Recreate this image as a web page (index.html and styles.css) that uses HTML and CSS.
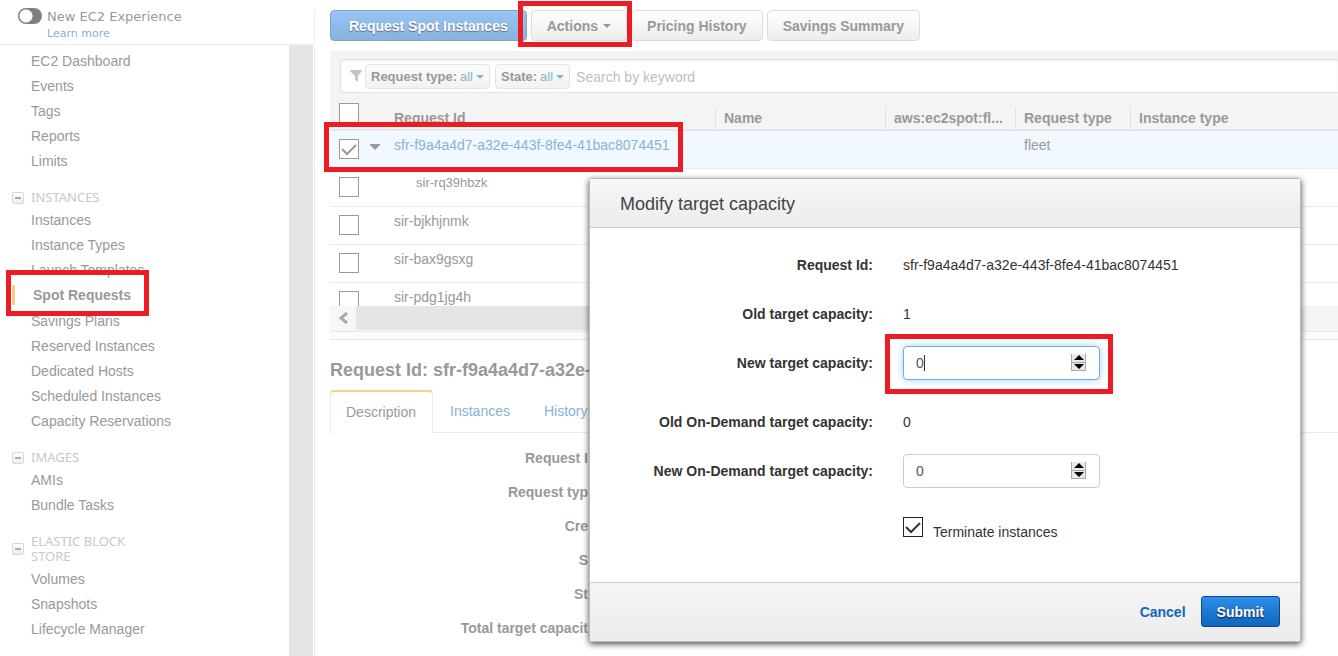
FILE: index.html
```html
<!DOCTYPE html>
<html lang="en">
<head>
<meta charset="utf-8">
<title>Spot Requests</title>
<link rel="stylesheet" href="styles.css">
</head>
<body>
<div class="app">
  <aside class="sidebar">
    <div class="experience">
      <input type="checkbox" class="switch" id="new-exp">
      <label for="new-exp">New EC2 Experience</label>
      <a href="#">Learn more</a>
    </div>
    <div class="nav-area">
      <nav class="nav">
        <ul>
          <li><a href="#">EC2 Dashboard</a></li>
          <li><a href="#">Events</a></li>
          <li><a href="#">Tags</a></li>
          <li><a href="#">Reports</a></li>
          <li><a href="#">Limits</a></li>
        </ul>
        <h2><button class="fold" aria-label="Collapse Instances"></button><span>INSTANCES</span></h2>
        <ul>
          <li><a href="#">Instances</a></li>
          <li><a href="#">Instance Types</a></li>
          <li><a href="#">Launch Templates</a></li>
          <li class="current"><a href="#">Spot Requests</a><span class="mark mark-nav"></span></li>
          <li><a href="#">Savings Plans</a></li>
          <li><a href="#">Reserved Instances</a></li>
          <li><a href="#">Dedicated Hosts</a></li>
          <li><a href="#">Scheduled Instances</a></li>
          <li><a href="#">Capacity Reservations</a></li>
        </ul>
        <h2><button class="fold" aria-label="Collapse Images"></button><span>IMAGES</span></h2>
        <ul>
          <li><a href="#">AMIs</a></li>
          <li><a href="#">Bundle Tasks</a></li>
        </ul>
        <h2><button class="fold" aria-label="Collapse Elastic Block Store"></button><span>ELASTIC BLOCK STORE</span></h2>
        <ul>
          <li><a href="#">Volumes</a></li>
          <li><a href="#">Snapshots</a></li>
          <li><a href="#">Lifecycle Manager</a></li>
        </ul>
      </nav>
      <div class="nav-scroll"></div>
    </div>
  </aside>

  <main class="main">
    <div class="toolbar">
      <button class="btn btn-primary">Request Spot Instances</button>
      <div class="marked">
        <button class="btn">Actions <svg width="8" height="4" viewBox="0 0 8 4"><path d="M0 0h8L4 4z" fill="#999"/></svg></button>
        <span class="mark mark-actions"></span>
      </div>
      <button class="btn">Pricing History</button>
      <button class="btn">Savings Summary</button>
    </div>

    <section class="panel">
      <div class="search">
        <svg class="funnel" width="12" height="12" viewBox="0 0 12 12"><path d="M0 0h12v1L8 6v6L5 10V6L0 1z" fill="#c4c4c4"/></svg>
        <div class="chip">
          <label for="f-type">Request type:</label>
          <select id="f-type"><option>all</option></select>
        </div>
        <div class="chip">
          <label for="f-state">State:</label>
          <select id="f-state"><option>all</option></select>
        </div>
        <input class="keyword" type="text" placeholder="Search by keyword" aria-label="Search by keyword">
      </div>
      <div class="grid">
        <table>
          <colgroup><col class="c-check"><col class="c-id"><col class="c-name"><col class="c-tag"><col class="c-type"><col></colgroup>
          <thead>
            <tr><th><input type="checkbox" class="tick" aria-label="Select all"></th><th>Request Id</th><th class="sep">Name</th><th class="sep">aws:ec2spot:fl...</th><th class="sep">Request type</th><th class="sep">Instance type</th></tr>
          </thead>
          <tbody>
            <tr class="selected"><td><input type="checkbox" class="tick" checked aria-label="Select fleet"><svg class="expand" width="10" height="6" viewBox="0 0 10 6"><path d="M0 0h10v1L5 6 0 1z" fill="#999"/></svg></td><td><a href="#">sfr-f9a4a4d7-a32e-443f-8fe4-41bac8074451</a></td><td></td><td></td><td>fleet</td><td></td></tr>
            <tr><td><input type="checkbox" class="tick" aria-label="Select sir-rq39hbzk"></td><td class="child">sir-rq39hbzk</td><td></td><td></td><td></td><td></td></tr>
            <tr><td><input type="checkbox" class="tick" aria-label="Select sir-bjkhjnmk"></td><td>sir-bjkhjnmk</td><td></td><td></td><td></td><td></td></tr>
            <tr><td><input type="checkbox" class="tick" aria-label="Select sir-bax9gsxg"></td><td>sir-bax9gsxg</td><td></td><td></td><td></td><td></td></tr>
            <tr><td><input type="checkbox" class="tick" aria-label="Select sir-pdg1jg4h"></td><td>sir-pdg1jg4h</td><td></td><td></td><td></td><td></td></tr>
          </tbody>
        </table>
      </div>
      <span class="mark mark-row"></span>
      <div class="hscroll">
        <button aria-label="Scroll left"><svg width="10" height="12" viewBox="0 0 10 12"><path d="M9 1L3 6l6 5" fill="none" stroke="#aaa" stroke-width="3"/></svg></button>
        <div class="thumb"></div>
      </div>
      <div class="splitter"></div>
    </section>

    <section class="details">
      <h1>Request Id: sfr-f9a4a4d7-a32e-</h1>
      <div class="tabs">
        <a class="tab active" href="#">Description</a>
        <a class="tab" href="#">Instances</a>
        <a class="tab" href="#">History</a>
      </div>
      <ul class="facts">
        <li>Request I</li>
        <li>Request typ</li>
        <li>Cre</li>
        <li>S</li>
        <li>St</li>
        <li>Total target capacit</li>
      </ul>
    </section>
  </main>
</div>

<form class="modal" role="dialog" aria-labelledby="modal-title">
  <header><h2 id="modal-title">Modify target capacity</h2></header>
  <div class="fields">
    <span class="name">Request Id:</span><span>sfr-f9a4a4d7-a32e-443f-8fe4-41bac8074451</span>
    <span class="name">Old target capacity:</span><span>1</span>
    <label class="name" for="cap">New target capacity:</label>
    <div class="number focused">
      <input type="number" id="cap" value="0">
      <span class="caret"></span>
      <svg class="spin" width="16" height="18" viewBox="0 0 16 18"><path d="M0 0h15v17H0z" fill="#e9e9e9"/><path d="M1 8.500h14M1 16.500h14M14.500 0v17M.5 0v17" stroke="#aaa"/><path d="M3 6l5-5 5 5zM3 10h10l-5 5z" fill="#000"/></svg>
      <span class="mark mark-input"></span>
    </div>
    <span class="name">Old On-Demand target capacity:</span><span>0</span>
    <label class="name" for="od">New On-Demand target capacity:</label>
    <div class="number">
      <input type="number" id="od" value="0">
      <svg class="spin" width="16" height="18" viewBox="0 0 16 18"><path d="M0 0h15v17H0z" fill="#e9e9e9"/><path d="M1 8.500h14M1 16.500h14M14.500 0v17M.5 0v17" stroke="#aaa"/><path d="M3 6l5-5 5 5zM3 10h10l-5 5z" fill="#000"/></svg>
    </div>
    <div class="terminate"><input type="checkbox" class="tick dark" id="term" checked><label for="term">Terminate instances</label></div>
  </div>
  <footer>
    <a href="#">Cancel</a>
    <button class="submit" type="button">Submit</button>
  </footer>
</form>
</body>
</html>
```

FILE: styles.css
```css
* { box-sizing: border-box; }
body {
  margin: 0;
  height: 100vh;
  overflow: hidden;
  position: relative;
  background: #fff;
  color: #999;
  font: 14px/20px "Liberation Sans", Arial, sans-serif;
}
ul { list-style: none; margin: 0; padding: 0; }
h1, h2 { margin: 0; }
a { color: #85b3da; text-decoration: none; }
button, input, select { font: inherit; margin: 0; }
svg { display: block; }
.app { display: flex; height: 100%; }

/* Red callout frames */
.mark { position: absolute; z-index: 5; border: 5px solid #ed1c24; pointer-events: none; }
.marked, .current, .panel, .number { position: relative; }
.mark-nav { left: 6px; top: -13px; width: 143px; height: 46px; }
.mark-actions { left: -13px; right: -5px; top: -9px; height: 46px; }
.mark-row { left: -6px; top: 71px; width: 359px; height: 50px; }
.mark-input { left: -18px; right: -13px; top: -12px; bottom: -14px; }

/* Sidebar */
.sidebar { flex: none; width: 315px; display: flex; flex-direction: column; background: linear-gradient(#eee, #eee) right 10px / 1px 100% no-repeat; }
.experience {
  height: 45px; padding: 8px 0 0 18px; border-bottom: 1px solid #eee;
  display: grid; grid-template-columns: 24px auto; column-gap: 5px; align-content: start;
  font: 13px/17px "DejaVu Sans", Verdana, sans-serif;
}
.experience a { grid-column: 2; font-size: 11px; }
.switch {
  appearance: none; width: 24px; height: 16px; border-radius: 8px;
  background: radial-gradient(circle at 8px 8px, #fff 6px, #808080 7px);
}
.nav-area { flex: 1; min-height: 0; display: flex; justify-content: space-between; padding-right: 2px; overflow: hidden; }
.nav { flex: 1; padding-top: 4px; }
.nav-scroll { width: 24px; background: #e5e5e5; }
.nav li { height: 25px; padding-left: 31px; line-height: 25px; }
.nav li a { color: #999; }
.nav li.current { height: 26px; padding-left: 33px; font-weight: bold; background: linear-gradient(#fc8, #fc8) 12px 2px / 3px 20px no-repeat; }
.nav h2 {
  display: flex; align-items: center; gap: 7px; padding: 0 140px 0 12px; margin: 16px 0 3px;
  color: #c8c8c8; font: 13px/15px "Noto Sans", sans-serif;
}
.fold {
  flex: none; width: 12px; height: 12px; padding: 0; border: 1px solid #d8d8d8; border-radius: 2px;
  background: linear-gradient(#aaa, #aaa) center / 6px 2px no-repeat, linear-gradient(#fff, #eee);
}

/* Toolbar */
.main { flex: 1; min-width: 0; padding: 10px 0 0 15px; }
.toolbar { display: flex; gap: 4px; margin-bottom: 10px; }
.btn {
  display: flex; align-items: center; justify-content: center; gap: 5px;
  height: 31px; padding: 0 15px; border: 1px solid #ddd; border-radius: 4px;
  background: linear-gradient(#fff, #ededed); color: #999; font-weight: bold; white-space: nowrap;
}
.btn-primary { padding: 0 18px; border-color: #7fa5cf; background: linear-gradient(#96c6f5, #88b2de); color: #fff; text-shadow: 0 1px 1px #668; }

/* Request list */
.panel { padding-top: 8px; background: #f4f4f4; }
.search {
  display: flex; align-items: center; height: 34px; margin-left: 10px; padding-left: 9px;
  border: 1px solid #e3e3e3; border-right: 0; border-radius: 4px 0 0 4px; background: #fff;
  box-shadow: inset 0 1px 2px #eee;
}
.funnel { margin-right: 3px; }
.chip {
  display: flex; align-items: center; height: 25px; padding: 2px 5px 0; margin-right: 5px;
  border: 1px solid #e5e5e5; border-radius: 4px; background: linear-gradient(#fcfcfc, #f2f2f2); font-size: 13px; font-weight: bold;
}
.chip select {
  appearance: none; width: 24px; height: 20px; margin-left: 3px; padding: 0; border: 0; color: #85b3da; font-weight: normal;
  background: url("data:image/svg+xml,%3Csvg xmlns='http://www.w3.org/2000/svg' width='8' height='4'%3E%3Cpath d='M0 0h8L4 4z' fill='%2385b3da'/%3E%3C/svg%3E") right 8px no-repeat;
}
.keyword { flex: 1; min-width: 0; border: 0; padding: 1px 1px 0; background: none; }
.keyword::placeholder { color: #c0c0c0; }
.grid { height: 213px; overflow: hidden; }
table { width: 100%; table-layout: fixed; border-collapse: separate; border-spacing: 0; }
.c-check { width: 55px; }
.c-id { width: 330px; }
.c-name { width: 170px; }
.c-tag { width: 130px; }
.c-type { width: 115px; }
th, td { height: 38px; padding: 4px 0 0 9px; text-align: left; vertical-align: top; white-space: nowrap; }
th { padding-top: 15px; border-bottom: 2px solid #e6e6e6; }
td { background: #fff; border-bottom: 1px solid #ebebeb; }
th.sep { background: linear-gradient(#e2e2e2, #e2e2e2) left bottom / 1px 22px no-repeat; }
.selected td { background: #f1f8ff; }
td.child { padding-left: 31px; font-size: 13px; }
th:first-child { padding-top: 10px; }
td:first-child { padding-top: 8px; }
.tick { appearance: none; display: block; float: left; width: 20px; height: 20px; border: 1px solid #999; background: #fff; }
.tick:checked {
  background: #fff url("data:image/svg+xml,%3Csvg xmlns='http://www.w3.org/2000/svg' width='18' height='18' fill='none' stroke='%23999' stroke-width='2'%3E%3Cpath d='M2 9l5 5L16 5'/%3E%3C/svg%3E");
}
.tick.dark { border-color: #222; }
.tick.dark:checked {
  background-image: url("data:image/svg+xml,%3Csvg xmlns='http://www.w3.org/2000/svg' width='18' height='18' fill='none' stroke='%23333' stroke-width='2'%3E%3Cpath d='M2 9l5 5L16 5'/%3E%3C/svg%3E");
}
.expand { float: left; margin: 5px 0 0 11px; }
.hscroll { display: flex; height: 24px; }
.hscroll button { display: flex; align-items: center; justify-content: center; width: 26px; padding: 0; border: 0; background: #f7f7f7; }
.thumb { width: 60%; background: #e5e5e5; }
.splitter { height: 9px; margin-top: 1px; border: solid #e8e8e8; border-width: 1px 0; background: #fbfbfb; }

/* Details */
h1 { padding: 19px 0 9px; font-size: 18px; line-height: 22px; white-space: nowrap; }
.tabs { display: flex; height: 43px; border-bottom: 1px solid #eaeaea; }
.tab { padding: 11px 17px; }
.tab.active { height: 43px; padding: 10px 16px 10px 15px; border: 1px solid #eaeaea; border-top: 2px solid #fc8; border-bottom: 0; border-radius: 4px 4px 0 0; background: #fff; color: #999; }
.facts { width: 258px; padding-top: 8px; font-weight: bold; text-align: right; }
.facts li { height: 34px; line-height: 34px; }

/* Dialog */
.modal {
  position: absolute; left: 589px; top: 178px; width: 712px; color: #333;
  border: 1px solid #bbb; border-radius: 3px; background: #fff; box-shadow: 0 2px 6px rgba(0, 0, 0, .7);
}
.modal header { height: 49px; padding: 14px 30px; border-bottom: 1px solid #ccc; background: linear-gradient(#f7f7f7, #ececec); }
.modal h2 { font-size: 18px; font-weight: normal; line-height: 22px; color: #444; }
.fields {
  display: grid; grid-template-columns: 283px 1fr; grid-template-rows: 34px 34px 44px 34px 34px 35px;
  gap: 15px 30px; padding: 20px 0 44px; line-height: 34px;
}
.name { text-align: right; font-weight: bold; }
.number { width: 197px; height: 34px; }
.number input { appearance: textfield; display: block; width: 100%; height: 34px; padding: 0 12px; border: 1px solid #ccc; border-radius: 4px; background: #fff; color: #555; outline: 0; }
.number input::-webkit-inner-spin-button { display: none; }
.focused input { border-color: #66afe9; box-shadow: 0 0 8px #a8d3f5; }
.spin { position: absolute; right: 13px; top: 8px; }
.caret { position: absolute; left: 21px; top: 9px; width: 1px; height: 16px; background: #333; }
.terminate { grid-column: 2; display: flex; gap: 10px; align-items: flex-start; padding-top: 14px; line-height: 30px; }
.modal footer { display: flex; align-items: center; justify-content: flex-end; gap: 15px; height: 59px; padding: 0 20px 1px 0; border-top: 1px solid #ccc; background: linear-gradient(#f5f5f5, #ececec); font-weight: bold; }
.modal footer a { color: #1166bb; }
.submit { height: 31px; padding: 0 15px; border: 1px solid #0d4a8a; border-radius: 3px; background: linear-gradient(#2e8ded, #1166bb); color: #fff; font-weight: bold; text-shadow: 0 1px 2px #024; }
```
